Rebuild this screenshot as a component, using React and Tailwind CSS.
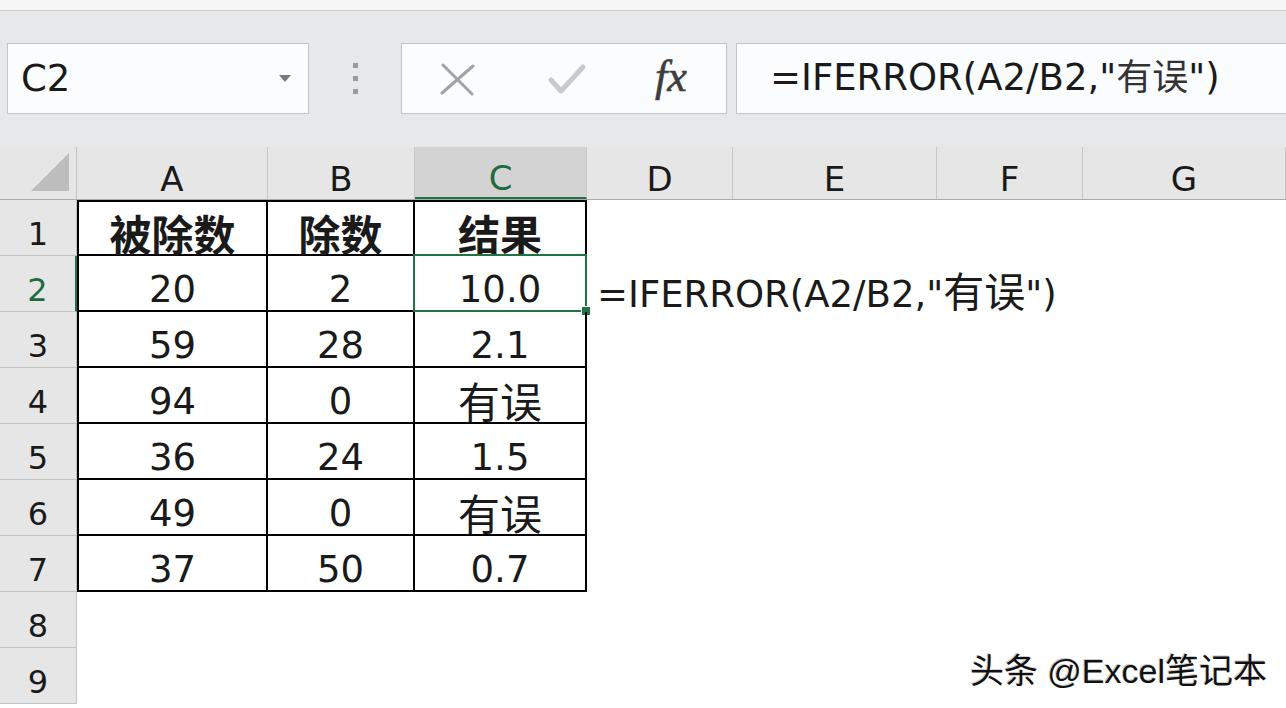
import React from 'react'

const font = { fontFamily: '"DejaVu Sans", "Noto Sans CJK SC", sans-serif' }

const cols = [
  { key: 'A', w: 'w-[191px]' },
  { key: 'B', w: 'w-[147px]' },
  { key: 'C', w: 'w-[172px]' },
  { key: 'D', w: 'w-[146px]' },
  { key: 'E', w: 'w-[204px]' },
  { key: 'F', w: 'w-[146px]' },
  { key: 'G', w: 'w-[203px]' },
]

const data = [
  ['被除数', '除数', '结果'],
  ['20', '2', '10.0'],
  ['59', '28', '2.1'],
  ['94', '0', '有误'],
  ['36', '24', '1.5'],
  ['49', '0', '有误'],
  ['37', '50', '0.7'],
  null,
  null,
]

// CJK glyphs sit a little larger than the latin ones in the sheet
function Mixed({ text, cjk }) {
  return text.split(/([\u4e00-\u9fff]+)/).map((part, i) =>
    /[\u4e00-\u9fff]/.test(part)
      ? <span key={i} className={cjk} style={{ fontFamily: '"Noto Sans CJK SC", sans-serif' }}>{part}</span>
      : <span key={i}>{part}</span>
  )
}

function XIcon() {
  return (
    <svg width="36" height="34" viewBox="0 0 36 34">
      <path d="M3 31 L34 4" stroke="#a3a3a3" strokeWidth="3" strokeLinecap="round" fill="none" />
      <path d="M4 3 L33 32" stroke="#a3a3a3" strokeWidth="3" strokeLinecap="round" fill="none" />
    </svg>
  )
}

function CheckIcon() {
  return (
    <svg width="40" height="34" viewBox="0 0 40 34">
      <path d="M4 18 L14 29 L36 5" stroke="#c9cacb" strokeWidth="5" strokeLinecap="round" strokeLinejoin="round" fill="none" />
    </svg>
  )
}

export default function App() {
  return (
    <div className="w-[1286px] h-[708px] overflow-hidden bg-[#e7e8ea] flex flex-col text-[#1a1a1a]" style={font}>
      <div className="h-[11px] bg-[#f7f7f7] border-b border-[#cfcfcf] shrink-0" />

      {/* formula bar */}
      <div className="h-[136px] shrink-0 flex items-start pt-[32px] pl-[7px]">
        <div className="w-[302px] h-[71px] bg-[#fbfcfe] border border-[#c4c4c4] flex items-center pl-[13px] pr-[17px]">
          <span className="text-[37px] flex-1 leading-none">C2</span>
          <span className="w-0 h-0 border-l-[6px] border-r-[6px] border-t-[7px] border-l-transparent border-r-transparent border-t-[#7a7a7a]" />
        </div>
        <div className="w-[92px] h-[71px] flex flex-col items-center justify-center gap-[8px]">
          <span className="w-[5px] h-[5px] bg-[#9c9c9c]" />
          <span className="w-[5px] h-[5px] bg-[#9c9c9c]" />
          <span className="w-[5px] h-[5px] bg-[#9c9c9c]" />
        </div>
        <div className="w-[326px] h-[71px] bg-[#fbfcfe] border border-[#c4c4c4] flex items-center pl-[37px]">
          <XIcon />
          <span className="w-[72px]" />
          <CheckIcon />
          <span className="w-[68px]" />
          <span className="text-[44px] italic text-[#3d3d3d] leading-none pb-[4px]" style={{ fontFamily: '"Liberation Serif", serif', WebkitTextStroke: '0.6px #3d3d3d' }}>fx</span>
        </div>
        <div className="w-[9px]" />
        <div className="flex-1 h-[71px] bg-[#fbfcfe] border border-[#c4c4c4] border-r-0 flex items-center pl-[33px] pb-[5px]">
          <span className="text-[37px] leading-none whitespace-nowrap">
            <Mixed text={'=IFERROR(A2/B2,"有误")'} cjk="text-[36px] text-[#333]" />
          </span>
        </div>
      </div>

      {/* sheet */}
      <div className="flex-1 flex flex-col bg-white">
        <div className="h-[53px] flex shrink-0 bg-[#e6e6e6] border-b border-[#acacac]">
          <div className="w-[77px] h-full border-r border-[#c2c2c2] flex items-end justify-end pr-[7px] pb-[8px]">
            <svg width="38" height="38" viewBox="0 0 38 38">
              <path d="M0 38 L38 0 L38 38 Z" fill="#bdbdbd" />
            </svg>
          </div>
          {cols.map(c => (
            <div
              key={c.key}
              className={`${c.w} h-full flex items-center justify-center pt-[12px] text-[34px] leading-none border-r border-[#c8c8c8] ${c.key === 'C' ? 'bg-[#d3d3d3] text-[#1e6b3e] border-b-2 border-b-[#217346]' : ''}`}
            >
              {c.key}
            </div>
          ))}
        </div>

        {data.map((row, ri) => (
          <div key={ri} className="h-[56px] flex shrink-0">
            <div className={`w-[77px] h-full flex items-center justify-center pt-[12px] text-[32px] leading-none bg-[#e6e6e6] border-b border-r border-[#c2c2c2] ${ri === 1 ? 'bg-[#d3d3d3] text-[#1e6b3e] border-r-2 border-r-[#217346]' : ''}`}>
              {ri + 1}
            </div>
            {cols.map((c, ci) => {
              const inTable = row && ci < 3
              const selected = ri === 1 && ci === 2
              return (
                <div
                  key={c.key}
                  className={`${c.w} h-full relative flex items-center ${inTable ? 'justify-center pt-[12px] border-r-2 border-b-2 border-black' : ''} ${inTable && ri === 0 ? 'border-t-2 font-bold' : ''} ${inTable && ci === 0 ? 'border-l-2' : ''}`}
                >
                  {inTable && (
                    <span className="text-[37px] leading-none whitespace-nowrap">
                      <Mixed text={row[ci]} cjk="text-[42px]" />
                    </span>
                  )}
                  {selected && (
                    <>
                      <span className="absolute -left-[2px] -top-[2px] right-[-2px] bottom-[-2px] border-2 border-[#217346]" />
                      <span className="absolute -right-[6px] -bottom-[6px] w-[10px] h-[10px] bg-[#217346] border border-white" />
                    </>
                  )}
                  {ri === 1 && ci === 3 && (
                    <span className="absolute left-[10px] top-[13px] text-[37px] leading-none whitespace-nowrap">
                      <Mixed text={'=IFERROR(A2/B2,"有误")'} cjk="text-[41px]" />
                    </span>
                  )}
                  {ri === 8 && ci === 5 && (
                    <span
                      className="absolute right-[-184px] top-[6px] text-[34px] leading-none whitespace-nowrap text-[#111]"
                      style={{ fontFamily: '"Liberation Sans", "Noto Sans CJK SC", sans-serif', textShadow: '1px 1px 0 #fff, -1px -1px 0 #ccc' }}
                    >
                      头条 @Excel笔记本
                    </span>
                  )}
                </div>
              )
            })}
          </div>
        ))}
      </div>
    </div>
  )
}
